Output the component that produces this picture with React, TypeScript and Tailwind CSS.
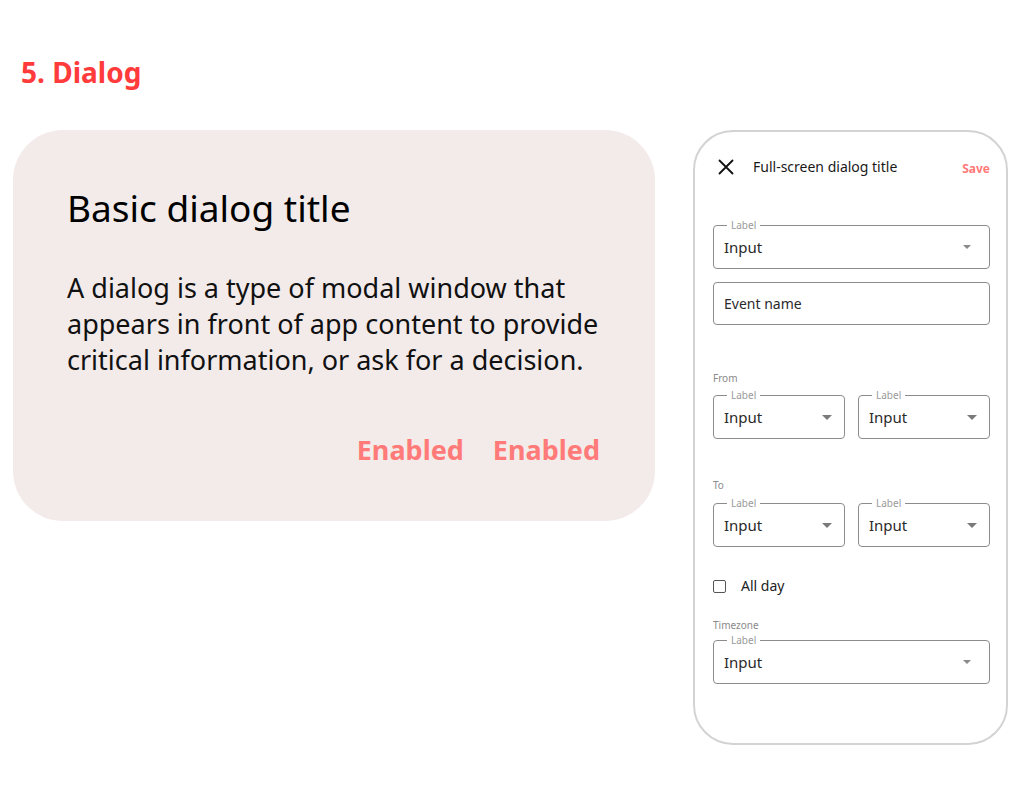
import React from 'react';

const FONT = { fontFamily: '"Noto Sans", "Open Sans", sans-serif' };

function Caret({ size = 'sm' }: { size?: 'sm' | 'md' }) {
  if (size === 'md') {
    return (
      <svg width="10" height="5" viewBox="0 0 10 5" className="shrink-0">
        <path d="M0 0h10L5 5z" fill="#7a7a7a" />
      </svg>
    );
  }
  return (
    <svg width="8" height="4" viewBox="0 0 8 4" className="shrink-0">
      <path d="M0 0h8L4 4z" fill="#8a8a8a" />
    </svg>
  );
}

function SelectField({
  caret = 'sm',
  caretGap = 'pr-[18px]',
}: {
  caret?: 'sm' | 'md';
  caretGap?: string;
}) {
  return (
    <div
      className={`relative flex h-[44px] w-full items-center justify-between rounded-[4px] border border-[#8c8c8c] pl-[10px] ${caretGap}`}
    >
      <span className="absolute -top-[7px] left-[13px] bg-white px-[4px] text-[10px] leading-[12px] text-[#9a9a9a]">
        Label
      </span>
      <span className="text-[15px] leading-[20px] text-[#2a2a2a]">Input</span>
      <Caret size={caret} />
    </div>
  );
}

function Caption({ children, className = '' }: { children: React.ReactNode; className?: string }) {
  return <div className={`text-[10px] leading-[14px] text-[#8a8a8a] ${className}`}>{children}</div>;
}

function BasicDialog() {
  return (
    <div className="flex h-[391px] w-[642px] shrink-0 flex-col rounded-[50px] bg-[#f3ebea] pl-[54px] pr-[55px] pt-[56px]">
      <h2 className="text-[37px] leading-[44px] text-black">Basic dialog title</h2>
      <p className="mt-[40px] text-[27px] leading-[36px] text-[#111]">
        A dialog is a type of modal window that appears in front of app content to provide critical
        information, or ask for a decision.
      </p>
      <div className="mt-[54px] flex justify-end gap-[29px]">
        <button className="text-[27px] font-bold leading-[36px] text-[#ff7a78]">Enabled</button>
        <button className="text-[27px] font-bold leading-[36px] text-[#ff7a78]">Enabled</button>
      </div>
    </div>
  );
}

function FullScreenDialog() {
  return (
    <div className="ml-[38px] flex h-[615px] w-[315px] shrink-0 flex-col rounded-[40px] border-2 border-[#d3d3d3] bg-white pl-[18px] pr-[16px] pt-[20px]">
      {/* Top bar */}
      <div className="flex h-[30px] items-center">
        <svg width="16" height="16" viewBox="0 0 16 16" className="ml-[5px] shrink-0">
          <path d="M1.5 1.5l13 13M14.5 1.5l-13 13" stroke="#111" strokeWidth="1.8" strokeLinecap="round" />
        </svg>
        <span className="ml-[19px] text-[14px] leading-[20px] text-[#1a1a1a]">Full-screen dialog title</span>
        <span className="ml-auto pt-[3px] text-[12px] font-bold leading-[16px] text-[#ff7a78]">Save</span>
      </div>

      <div className="mt-[43px]">
        <SelectField />
      </div>

      <div className="mt-[13px] flex h-[43px] w-full items-center rounded-[4px] border border-[#8c8c8c] pl-[10px]">
        <span className="text-[14px] leading-[20px] text-[#2a2a2a]">Event name</span>
      </div>

      <Caption className="mt-[46px]">From</Caption>
      <div className="mt-[10px] grid grid-cols-2 gap-[13px]">
        <SelectField caret="md" caretGap="pr-[12px]" />
        <SelectField caret="md" caretGap="pr-[12px]" />
      </div>

      <Caption className="mt-[39px]">To</Caption>
      <div className="mt-[11px] grid grid-cols-2 gap-[13px]">
        <SelectField caret="md" caretGap="pr-[12px]" />
        <SelectField caret="md" caretGap="pr-[12px]" />
      </div>

      <label className="mt-[29px] flex h-[20px] items-center">
        <span className="h-[13px] w-[13px] rounded-[2px] border-[1.5px] border-[#555]" />
        <span className="ml-[15px] text-[14px] leading-[20px] text-[#222]">All day</span>
      </label>

      <Caption className="mt-[22px]">Timezone</Caption>
      <div className="mt-[8px]">
        <SelectField />
      </div>
    </div>
  );
}

export default function App() {
  return (
    <div className="h-[810px] w-[1027px] overflow-hidden bg-white" style={FONT}>
      <h1 className="ml-[21px] pt-[54px] text-[28px] font-bold leading-[36px] text-[#ff3b3b]">5. Dialog</h1>
      <div className="mt-[40px] flex items-start pl-[13px]">
        <BasicDialog />
        <FullScreenDialog />
      </div>
    </div>
  );
}
